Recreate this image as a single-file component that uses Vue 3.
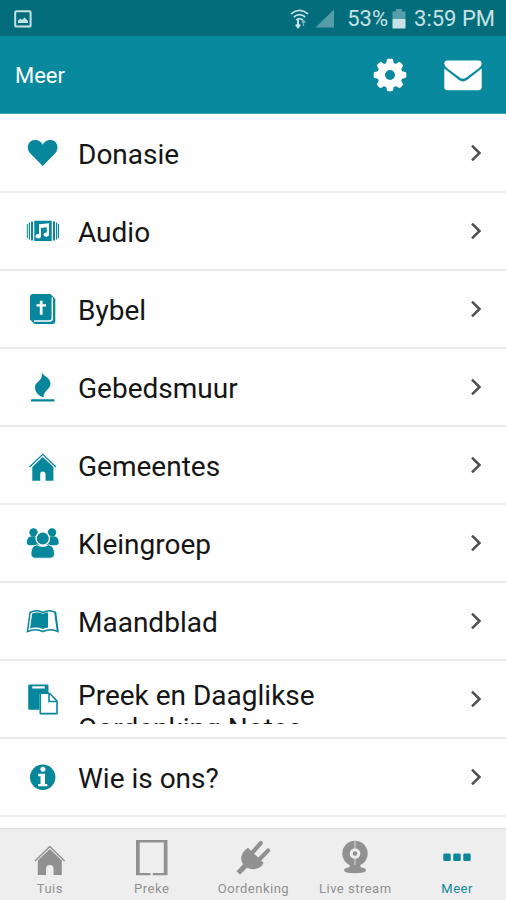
<script setup>
const items = [
  { icon: 'heart', label: 'Donasie' },
  { icon: 'audio', label: 'Audio' },
  { icon: 'bible', label: 'Bybel' },
  { icon: 'flame', label: 'Gebedsmuur' },
  { icon: 'house', label: 'Gemeentes' },
  { icon: 'group', label: 'Kleingroep' },
  { icon: 'book', label: 'Maandblad' },
  { icon: 'paste', label: 'Preek en Daaglikse Oordenking Notas', long: true },
  { icon: 'info', label: 'Wie is ons?' },
]
const tabs = [
  { icon: 'home', label: 'Tuis' },
  { icon: 'tablet', label: 'Preke' },
  { icon: 'plug', label: 'Oordenking' },
  { icon: 'webcam', label: 'Live stream' },
  { icon: 'more', label: 'Meer', active: true },
]
</script>

<template>
  <div class="screen">
    <div class="status">
      <svg class="picture" width="18" height="18" viewBox="0 0 18 18">
        <rect x="1.2" y="1.2" width="15.4" height="15.4" rx="1.2" fill="none" stroke="currentColor" stroke-width="2" />
        <path d="M4 13V10.5L6.5 8.5L8 10L10.5 7.5L14 11V13Z" fill="currentColor" />
      </svg>
      <svg class="signals" width="46" height="20" viewBox="0 0 46 20">
        <g fill="none" stroke="currentColor" stroke-width="1.7">
          <path d="M1 4.8Q9.5 -2 18 4.8M3.8 8Q9.5 3.4 15.2 8M6.3 11Q9.500 8.200 12.700 11" />
          <path d="M8 10V18M5.800 15.500L8 18.300L10.200 15.500" stroke-width="2" />
          <path d="M13.500 17V11.500M11.700 13.500L13.500 11.500L15.300 13.500" stroke-width="1.200" opacity=".65" />
        </g>
        <path d="M44 .5V18.500H25.500Z" fill="currentColor" opacity=".42" />
      </svg>
      <span class="percent">53%</span>
      <svg class="battery" width="14" height="20" viewBox="0 0 14 20">
        <path d="M4 0H10V2.500H13.500V10H.5V2.500H4Z" fill="currentColor" opacity=".42" />
        <path d="M.5 10H13.500V19.500H.5Z" fill="currentColor" />
      </svg>
      <span class="clock">3:59 PM</span>
    </div>

    <header class="bar">
      <h1>Meer</h1>
      <svg class="gear" width="34" height="34" viewBox="-17 -17 34 34">
        <g fill="#fff">
          <path v-for="a in 8" :key="a" :transform="`rotate(${a * 45})`" d="M-4.300 -10L-3 -15.200Q-2.800 -16.300 -1.800 -16.300H1.800Q2.800 -16.300 3 -15.200L4.300 -10Z" />
        </g>
        <circle r="8.800" fill="none" stroke="#fff" stroke-width="7.600" />
      </svg>
      <svg class="mail" width="38" height="31" viewBox="0 0 38 31">
        <path d="M3.500 .5H34.500Q37.700 .5 37.700 3.500Q37.700 6.300 34.500 8.500L22 17.800Q19 19.900 16 17.800L3.500 8.500Q.3 6.300 .3 3.500Q.3 .5 3.500 .5Z" fill="#fff" />
        <path d="M.3 8.600L15 20Q19 22.800 23 20L37.700 8.600V27Q37.700 30.300 34.500 30.300H3.500Q.3 30.300 .3 27Z" fill="#fff" />
      </svg>
    </header>

    <main class="list">
      <div v-for="item in items" :key="item.label" class="row">
        <svg class="icon" width="36" height="36" viewBox="0 0 36 36" fill="currentColor">
          <path v-if="item.icon === 'heart'" d="M17.700 31L4.900 18C.7 13 3 5 10.200 5C14.200 5 16.500 7.500 17.700 9.700C18.900 7.500 21.200 5 25.200 5C32.400 5 34.500 13 30.500 18Z" />
          <g v-else-if="item.icon === 'audio'">
            <path d="M9.300 7.800H26.700V28H9.300ZM6 8.500H8V27.500H6ZM28 8.500H30V27.500H28ZM3.800 9.500H5V26.500H3.800ZM31 9.500H32.200V26.500H31ZM1.800 11H2.800V25H1.800ZM33 11H34V25H33Z" />
            <path d="M14 11.300L24 10.300V21.300H21.800V14.300L16 15V23.500H14Z" fill="#fff" />
            <ellipse cx="13.300" cy="23.200" rx="2.700" ry="2.100" fill="#fff" />
            <ellipse cx="21.300" cy="21.600" rx="2.700" ry="2.100" fill="#fff" />
          </g>
          <g v-else-if="item.icon === 'bible'">
            <path d="M8 3H25.500L30.300 8V29.800Q30.300 33 27 33H9.500L5 28.500V6Q5 3 8 3Z" />
            <path d="M27.300 6.500V27.200Q27.300 30 24.500 30H9" fill="none" stroke="#fff" stroke-width="1.500" />
            <path d="M14.800 9.800H17.600V13.300H21V15.600H17.600V23.800H14.800V15.600H11.500V13.300H14.800Z" fill="#fff" />
          </g>
          <g v-else-if="item.icon === 'flame'">
            <path d="M16.500 3.200C19 7.500 25.500 8.500 25.500 14.800C25.500 20.500 17.500 22.500 18.700 28.600C14 26.800 10 23.500 10 18.500C10 12 18.800 12 16.500 3.200Z" />
            <rect x="6" y="30.300" width="23.500" height="2.300" rx=".6" />
          </g>
          <g v-else-if="item.icon === 'house'">
            <path d="M4.500 20L17.800 7.300L31 20" fill="none" stroke="currentColor" stroke-width="1.300" />
            <path d="M17.800 10L28.400 20V33.700H20.500V27.500Q20.500 24.500 17.800 24.500Q15.200 24.500 15.200 27.500V33.700H7.300V20Z" />
          </g>
          <g v-else-if="item.icon === 'group'">
            <circle cx="8.500" cy="7.500" r="4.200" />
            <circle cx="27" cy="7.500" r="4.200" />
            <path d="M5 11.500H14L14.500 20L10 20.300H5Q1.800 20.300 1.800 17.500Q1.800 13 5 11.500ZM30.500 11.500H21.500L21 20L25.500 20.300H30.500Q33.700 20.300 33.700 17.500Q33.700 13 30.500 11.500Z" />
            <circle cx="17.800" cy="13.500" r="6.700" stroke="#fff" stroke-width="1.400" />
            <path d="M12 19.800Q17.800 23.300 23.600 19.800Q29.500 21 29.500 28.500Q29.500 33.200 25 33.200H10.500Q6 33.200 6 28.500Q6 21 12 19.800Z" stroke="#fff" stroke-width=".8" />
          </g>
          <g v-else-if="item.icon === 'book'">
            <path d="M5 9.500Q11.500 6.200 18 9.500Q24.500 6.200 30.500 9.500L33 28.500Q25.500 25 18 28.500Q10.500 25 2.500 28.500Z" fill="#fff" stroke="currentColor" stroke-width="1.500" />
            <path d="M7.200 10.500Q13 8.500 18 11V26Q11.500 23.500 5 25.500ZM18 11Q20.500 9.300 23 9.600V24.500Q20 24.600 18 26Z" />
            <path d="M30 10L32.500 28" stroke="currentColor" stroke-width="1.500" />
          </g>
          <g v-else-if="item.icon === 'paste'">
            <path d="M4.300 3.500H22.500Q23.500 3.500 23.500 4.500V13H14.500V28.800H4.300Q3.200 28.800 3.200 27.700V4.500Q3.200 3.500 4.300 3.500Z" />
            <rect x="7.300" y="5.300" width="12.500" height="2.200" fill="#fff" />
            <path d="M15.300 12.300H24.500L32 20V32.600H15.300Z" fill="#fff" stroke="currentColor" stroke-width="1.600" stroke-linejoin="round" />
            <path d="M24 12.500V20.500H32" fill="none" stroke="currentColor" stroke-width="1.600" />
          </g>
          <g v-else>
            <circle cx="17.700" cy="18.300" r="12.700" />
            <path d="M13.200 14.800H20V25H22.300V27.300H13.200V25H15.500V17.200H13.200Z" fill="#fff" />
            <circle cx="17.900" cy="10.300" r="2.500" fill="#fff" />
          </g>
        </svg>
        <div class="label" :class="{ long: item.long }">{{ item.label }}</div>
        <svg class="chevron" width="12" height="18" viewBox="0 0 12 18">
          <path d="M2 1.700L9.500 9L2 16.300" fill="none" stroke="#505050" stroke-width="2.500" />
        </svg>
      </div>
    </main>

    <nav class="tabs">
      <div v-for="tab in tabs" :key="tab.label" class="tab" :class="{ active: tab.active }">
        <svg width="40" height="40" viewBox="0 0 40 40" fill="currentColor">
          <g v-if="tab.icon === 'home'">
            <path d="M5 23L19.800 8.500L34.600 23" fill="none" stroke="currentColor" stroke-width="1.500" />
            <path d="M19.800 11L31.800 22.500V37H23.500V30.500Q23.500 27 19.800 27Q16.100 27 16.100 30.500V37H7.800V22.500Z" />
          </g>
          <path v-else-if="tab.icon === 'tablet'" d="M4 2H35.500V37.200H20.800V35H31.800V4.600H7.700V35H18.500V37.200H4Z" />
          <g v-else-if="tab.icon === 'plug'">
            <path d="M15 9.800L30.500 24.800Q29 28.800 25 30.300Q19 32.500 14 29.800L7 36.800L3.500 33.300L10 26.300Q6.500 21 9.500 15.300Q11.500 11.800 15 9.800Z" />
            <path d="M20 13.800L27.800 5M27 20.800L35 12.600" stroke="currentColor" stroke-width="4.200" stroke-linecap="round" />
          </g>
          <g v-else-if="tab.icon === 'webcam'">
            <circle cx="20" cy="15.500" r="12.700" />
            <path d="M20 2V31" stroke="#eee" stroke-width=".8" />
            <circle cx="20" cy="15.500" r="5.300" fill="#eee" />
            <circle cx="20" cy="15.500" r="2.300" />
            <path d="M15 27H25L26 29.500Q31 30 31 32Q31 35.300 20 35.300Q9 35.300 9 32Q9 30 14 29.500Z" />
          </g>
          <path v-else d="M7.500 15.500h5q1.200 0 1.200 1.200v5q0 1.200-1.200 1.200h-5q-1.200 0-1.200-1.200v-5q0-1.200 1.200-1.200ZM17.500 15.500h5q1.200 0 1.200 1.200v5q0 1.200-1.200 1.200h-5q-1.200 0-1.200-1.200v-5q0-1.200 1.200-1.200ZM27.500 15.500h5q1.200 0 1.200 1.200v5q0 1.200-1.200 1.200h-5q-1.200 0-1.200-1.200v-5q0-1.200 1.200-1.200Z" />
        </svg>
        <span>{{ tab.label }}</span>
      </div>
    </nav>
  </div>
</template>

<style>
body {
  margin: 0;
  background: #fff;
}
</style>

<style scoped>
.screen {
  display: flex;
  flex-direction: column;
  width: 506px;
  height: 900px;
  overflow: hidden;
  background: #fefefe;
  font-family: Roboto, sans-serif;
}
.status {
  display: flex;
  align-items: center;
  flex: none;
  box-sizing: border-box;
  height: 36px;
  padding: 1px 11px 0 14px;
  background: #046d7b;
  color: #c5e2e6;
  font-size: 22px;
}
.signals {
  margin-left: auto;
}
.percent {
  margin-left: 11px;
}
.battery {
  margin: 0 8px 0 4px;
}
.bar {
  display: flex;
  align-items: center;
  flex: none;
  box-sizing: border-box;
  height: 78px;
  padding: 1px 24px 0 15px;
  background: #08899d;
  border-bottom: 1px solid #3d9eac;
}
.bar h1 {
  margin: 0 auto 0 0;
  color: #fff;
  font-size: 22px;
  font-weight: 400;
}
.mail {
  margin-left: 37px;
}
.list {
  flex: 1;
  min-height: 0;
  padding-top: 1px;
  overflow: hidden;
}
.row {
  display: flex;
  align-items: center;
  box-sizing: border-box;
  height: 78px;
  padding: 0 24px 0 25px;
  border-bottom: 2px solid #ebebeb;
}
.icon {
  flex: none;
  color: #07879b;
}
.label {
  flex: none;
  width: 280px;
  height: 33px;
  margin: 3px auto 0 17px;
  overflow: hidden;
  color: #151515;
  font-size: 28px;
  line-height: 33px;
}
.label.long {
  box-sizing: border-box;
  height: 47px;
  padding-top: 2px;
  line-height: 33px;
}
.tabs {
  display: grid;
  grid-template-columns: repeat(5, 1fr);
  flex: none;
  box-sizing: border-box;
  width: 509px;
  height: 72px;
  margin-left: -1px;
  background: #eee;
  border-top: 1px solid #dcdcdc;
}
.tab {
  display: flex;
  flex-direction: column;
  align-items: center;
  padding-top: 9px;
  color: #919191;
  font-size: 13px;
  line-height: 16px;
  letter-spacing: .5px;
  white-space: nowrap;
}
.tab span {
  margin-top: 3px;
}
.tab.active {
  color: #0c8799;
}
</style>
